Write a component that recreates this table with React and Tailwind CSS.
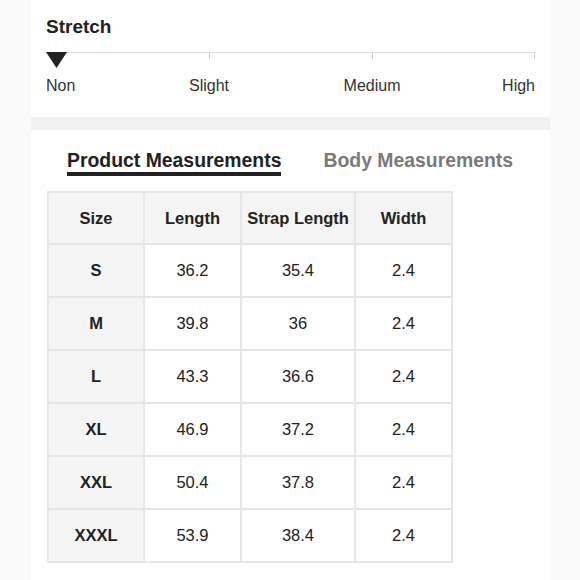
import React from "react"

const rows = [
  ["S", "36.2", "35.4", "2.4"],
  ["M", "39.8", "36", "2.4"],
  ["L", "43.3", "36.6", "2.4"],
  ["XL", "46.9", "37.2", "2.4"],
  ["XXL", "50.4", "37.8", "2.4"],
  ["XXXL", "53.9", "38.4", "2.4"],
]

function StretchScale() {
  return (
    <section className="h-[117px] bg-white pl-[15px] pt-[16px]">
      <h2 className="text-[19px] leading-[22px] font-bold text-[#222]">Stretch</h2>
      <div className="relative mt-[14px] w-[489px] h-[16px]">
        <div className="h-px bg-[#dcdcdc]" />
        {/* tick marks */}
        <div className="absolute top-0 left-[163px] w-px h-[7px] bg-[#d0d0d0]" />
        <div className="absolute top-0 left-[326px] w-px h-[7px] bg-[#d0d0d0]" />
        <div className="absolute top-0 left-[488px] w-px h-[7px] bg-[#d0d0d0]" />
        <svg
          className="absolute top-0 left-0"
          width="21"
          height="16"
          viewBox="0 0 21 16"
        >
          <polygon points="0,0 21,0 10.5,16" fill="#222" />
        </svg>
      </div>
      <div className="grid grid-cols-6 w-[489px] mt-[8px] text-[16px] leading-[20px] text-[#333]">
        <span className="col-span-1 text-left">Non</span>
        <span className="col-span-2 text-center">Slight</span>
        <span className="col-span-2 text-center">Medium</span>
        <span className="col-span-1 text-right">High</span>
      </div>
    </section>
  )
}

function MeasurementTable() {
  return (
    <table className="table-fixed border-collapse w-[404px] ml-[16px] mt-[15px] text-[16.5px] text-[#222]">
      <colgroup>
        <col className="w-[96px]" />
        <col className="w-[97px]" />
        <col className="w-[114px]" />
        <col className="w-[97px]" />
      </colgroup>
      <thead>
        <tr className="h-[52px] bg-[#f5f5f5]">
          {["Size", "Length", "Strap Length", "Width"].map(h => (
            <th key={h} className="border-2 border-[#e6e6e6] font-bold text-center p-0">
              {h}
            </th>
          ))}
        </tr>
      </thead>
      <tbody>
        {rows.map(r => (
          <tr key={r[0]} className="h-[53px]">
            <td className="border-2 border-[#e6e6e6] bg-[#f5f5f5] font-bold text-center p-0">
              {r[0]}
            </td>
            <td className="border-2 border-[#e6e6e6] text-center p-0">{r[1]}</td>
            <td className="border-2 border-[#e6e6e6] text-center p-0">{r[2]}</td>
            <td className="border-2 border-[#e6e6e6] text-center p-0">{r[3]}</td>
          </tr>
        ))}
      </tbody>
    </table>
  )
}

export default function App() {
  return (
    <div
      className="w-[580px] h-[580px] overflow-hidden bg-[#fafafa] pl-[31px]"
      style={{ fontFamily: '"Liberation Sans", Arial, sans-serif' }}
    >
      <div className="w-[519px] h-full flex flex-col">
        <StretchScale />
        <div className="h-[13px] bg-[#f2f2f2]" />
        <section className="flex-1 bg-white pt-[19px]">
          <div className="flex items-start pl-[36px] gap-[42px] text-[19.4px] leading-[23px] font-bold">
            <span className="text-[#222] border-b-4 border-[#222]">Product Measurements</span>
            <span className="text-[#7a7a7a]">Body Measurements</span>
          </div>
          <MeasurementTable />
        </section>
      </div>
    </div>
  )
}
